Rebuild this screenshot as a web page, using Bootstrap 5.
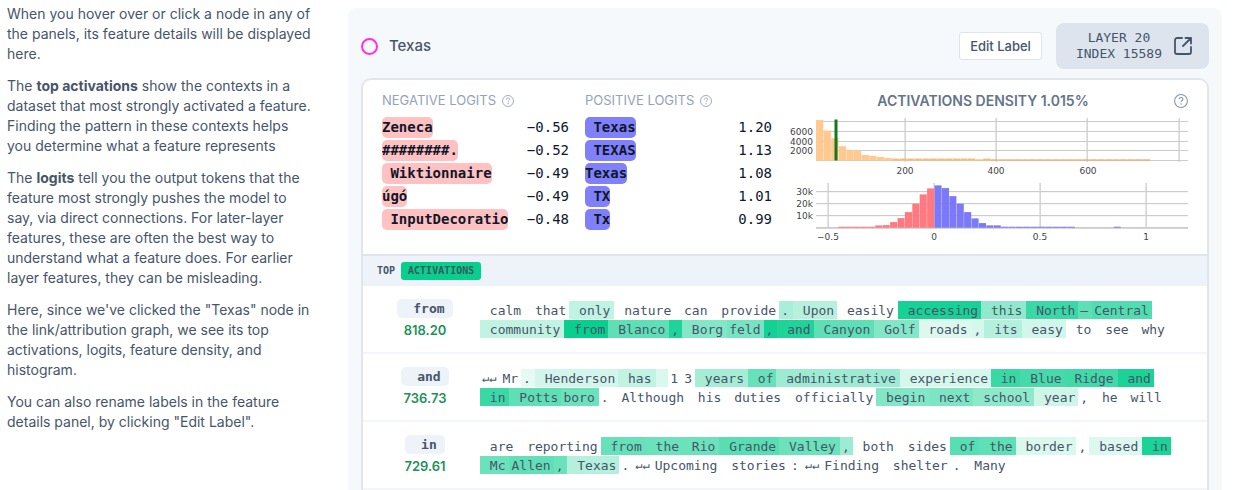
<!DOCTYPE html>
<html lang="en">
<head>
<meta charset="utf-8">
<meta name="viewport" content="width=device-width, initial-scale=1">
<title>Feature details</title>
<link href="https://cdn.jsdelivr.net/npm/bootstrap@5.3.0/dist/css/bootstrap.min.css" rel="stylesheet">
<style>
body{font-family:Inter,sans-serif;font-size:14px;line-height:20px;color:#475569;background:#fff}
.mono{font-family:"DejaVu Sans Mono",monospace}
.intro{flex:0 0 348px;padding:4px 34px 0 7px}
.intro p{margin-bottom:12px}
.panel{background:#f6f9fb;border-radius:8px 8px 0 0;padding:15px 13px 0;margin:8px 12px 0 0;min-width:0}
.ring{width:17px;height:17px;border:2px solid #ff2fe6;border-radius:50%}
.feature-name{font-size:15px;font-weight:500;line-height:24px;margin:0;padding-left:11px}
.edit{font-size:13px;line-height:20px;font-weight:500;color:#475569;background:#fff;border:1px solid #dfe4ec;border-radius:3px;padding:3px 10px}
.source{background:#dde4ed;border-radius:8px;color:#475569;font-size:13px;line-height:16px;padding:7px 17px 7px 20px;margin-left:14px;gap:12px;text-decoration:none;text-align:center}
.details{background:#fff;border:2px solid #e1e6ed;border-bottom:0;border-radius:10px 10px 0 0;margin-top:9px;overflow:hidden}
.stats{display:grid;grid-template-columns:187px 187px minmax(0,1fr);padding:11px 11px 0 19px;height:174px}
.stats>section+section{margin-left:16px;margin-right:-16px}
.stats>section.density{margin-left:28px;margin-right:0}
.caption{font-size:13px;line-height:19px;font-weight:400;color:#94a3b8;margin:0 0 7px;gap:6px}
.density .caption{font-size:14px;font-weight:600;color:#64748b;margin:0;padding-left:14px}
.density .caption svg{color:#8593ab}
.logits{width:100%;color:#0f172a;font-size:14px;line-height:21px;border-collapse:separate;border-spacing:0;table-layout:fixed}
.logits td{padding:0 0 2px;height:23px}
.logits td:last-child{width:50px;text-align:right}
.chip{display:block;width:fit-content;max-width:126px;overflow:hidden;white-space:pre;font-weight:700;border-radius:5px}
.neg .chip{background:#ffc1c1}
.pos .chip{background:#8080fb}
.acts-head{background:#eef2f9;border-top:2px solid #dfe4ea;font-size:10px;line-height:18px;font-weight:700;padding:6px 14px;gap:6px}
.acts-head mark{background:#08ce8e;color:#3c5a5c;border-radius:3px;padding:0 7px}
.act{border-bottom:2px solid #f2f5fa;padding:13px 0 0 14px;height:68px;gap:7px}
.peak{flex:0 0 96px;text-align:center}
.peak .mono{display:block;width:fit-content;margin:0 auto;background:#eef2f9;border-radius:5px;font-size:13px;line-height:19px;font-weight:700;padding:0 8px;white-space:pre}
.peak b{display:block;font-size:13px;line-height:20px;margin-top:2px;color:#1e9159;font-weight:600}
.context{font-size:13px;line-height:17px;padding-top:2px}
.line{display:flex;white-space:pre;margin-bottom:1px}
.line span{padding:1px 4px 0 2px}
.line span:nth-child(even){padding-right:3px}
.line .ret{font-size:12px}
svg text{font-family:"DejaVu Sans",sans-serif;font-size:9px;fill:#444}
</style>
</head>
<body>
<svg width="0" height="0" class="position-absolute"><symbol id="help" viewBox="0 0 24 24"><circle cx="12" cy="12" r="11" fill="none" stroke="currentColor" stroke-width="1.8"/><path d="M8.8 9.2c0-4.4 6.5-4.1 6.5-.3 0 2.3-3.1 2.3-3.1 5" fill="none" stroke="currentColor" stroke-width="1.9"/><circle cx="12.2" cy="17.2" r="1.3" fill="currentColor"/></symbol></svg>
<div class="d-flex vh-100 overflow-hidden">
<aside class="intro">
<p>When you hover over or click a node in any of the panels, its feature details will be displayed here.</p>
<p>The <b>top activations</b> show the contexts in a dataset that most strongly activated a feature. Finding the pattern in these contexts helps you determine what a feature represents</p>
<p>The <b>logits</b> tell you the output tokens that the feature most strongly pushes the model to say, via direct connections. For later-layer features, these are often the best way to understand what a feature does. For earlier layer features, they can be misleading.</p>
<p>Here, since we've clicked the "Texas" node in the link/attribution graph, we see its top activations, logits, feature density, and histogram.</p>
<p>You can also rename labels in the feature details panel, by clicking "Edit Label".</p>
</aside>
<main class="panel flex-grow-1">
<header class="d-flex align-items-center">
<span class="ring"></span><h1 class="feature-name flex-grow-1">Texas</h1>
<button type="button" class="edit">Edit Label</button>
<a href="#" class="source mono d-flex align-items-center"><span>LAYER 20<br>INDEX 15589</span>
<svg width="18" height="18" viewBox="0 0 18 18" fill="none" stroke="currentColor" stroke-width="1.8" stroke-linecap="round" stroke-linejoin="round"><path d="M8 1H3a2 2 0 0 0-2 2v12a2 2 0 0 0 2 2h12a2 2 0 0 0 2-2v-5M11.500 1H17v5.500M17 1 9 9"/></svg></a>
</header>
<div class="details">
<div class="stats">
<section class="neg">
<h2 class="caption d-flex align-items-center">NEGATIVE LOGITS <svg width="12" height="12"><use href="#help"/></svg></h2>
<table class="logits mono">
<tr><td><span class="chip">Zeneca</span></td><td>−0.56</td></tr>
<tr><td><span class="chip">########.</span></td><td>−0.52</td></tr>
<tr><td><span class="chip"> Wiktionnaire</span></td><td>−0.49</td></tr>
<tr><td><span class="chip">úgó</span></td><td>−0.49</td></tr>
<tr><td><span class="chip"> InputDecoration</span></td><td>−0.48</td></tr>
</table>
</section>
<section class="pos">
<h2 class="caption d-flex align-items-center">POSITIVE LOGITS <svg width="12" height="12"><use href="#help"/></svg></h2>
<table class="logits mono">
<tr><td><span class="chip"> Texas</span></td><td>1.20</td></tr>
<tr><td><span class="chip"> TEXAS</span></td><td>1.13</td></tr>
<tr><td><span class="chip">Texas</span></td><td>1.08</td></tr>
<tr><td><span class="chip"> TX</span></td><td>1.01</td></tr>
<tr><td><span class="chip"> Tx</span></td><td>0.99</td></tr>
</table>
</section>
<section class="density">
<h2 class="caption d-flex align-items-center"><span class="flex-grow-1 text-center">ACTIVATIONS DENSITY 1.015%</span><svg width="14" height="14" class="me-2"><use href="#help"/></svg></h2>
<svg id="charts" class="d-block w-100" viewBox="0 0 412 138"></svg>
</section>
</div>
<div class="acts-head mono d-flex align-items-center"><span>TOP</span><mark>ACTIVATIONS</mark></div>
<div id="acts"></div>
</div>
</main>
</div>
<script src="https://cdn.jsdelivr.net/npm/bootstrap@5.3.0/dist/js/bootstrap.bundle.min.js"></script>
<script>
// Each token is [text, activation strength from 0 to 100].
const rows = [
 [" from", "818.20", [
  [[" calm",0],[" that",0],[" only",25],[" nature",0],[" can",0],[" provide",0],[".",35],[" Upon",29],[" easily",0],[" accessing",94],[" this",45],[" North",80],["–",65],["Central",70]],
  [[" community",25],[" from",100],[" Blanco",65],[",",90],[" Borg",50],["feld",55],[",",95],[" and",90],[" Canyon",65],[" Golf",50],[" roads",14],[",",17],[" its",30],[" easy",18],[" to",0],[" see",0],[" why",0]]]],
 [" and", "736.73", [
  [["↵↵",0],["Mr",0],[".",10],[" Henderson",18],[" has",25],[" ",15],["1",0],["3",0],[" years",36],[" of",62],[" administrative",40],[" experience",17],[" in",80],[" Blue",75],[" Ridge",77],[" and",92]],
  [[" in",80],[" Potts",65],["boro",60],[".",0],[" Although",0],[" his",0],[" duties",0],[" officially",0],[" begin",50],[" next",52],[" school",46],[" year",20],[",",0],[" he",0],[" will",0]]]],
 [" in", "729.61", [
  [[" are",0],[" reporting",0],[" from",62],[" the",60],[" Rio",60],[" Grande",67],[" Valley",60],[",",40],[" both",0],[" sides",0],[" of",68],[" the",65],[" border",15],[",",0],[" based",14],[" in",92]],
  [[" Mc",60],["Allen",64],[",",60],[" Texas",30],[".",0],["↵↵",0],["Upcoming",0],[" stories",0],[":",0],["↵↵",0],["Finding",0],[" shelter",0],[".",0],[" Many",0]]]]
];
document.getElementById("acts").innerHTML = rows.map(([label, score, lines]) =>
 `<div class="act d-flex"><div class="peak"><span class="mono">${label}</span><b>${score}</b></div><div class="context mono">` +
 lines.map(l => `<div class="line">` + l.map(([t, a]) =>
  `<span${t[0] === "↵" ? ' class="ret"' : ""}${a ? ` style="background:rgba(8,206,142,${a / 100})"` : ""}>${t}</span>`).join("") + "</div>").join("") +
 "</div></div>").join("");

let g = "";
const rect = (x, y, w, h, f) => g += `<rect x="${x}" y="${y}" width="${w}" height="${h}" fill="${f}"/>`;
const label = (x, y, t, a) => g += `<text x="${x}" y="${y}" text-anchor="${a}">${t}</text>`;
// Activation density
[11, 21, 31, 40, 50].forEach(y => rect(32, y, 372, 1, "#ccc"));
[121, 212, 303, 395].forEach(x => rect(x - .5, 8, 1.3, 44, "#ccc"));
[40.5, 30, 22.3, 14.3, 10.7, 10, 5.5, 4.6, 3.6, 2.6].forEach((h, i) => rect(32 + i * 7.6, 50.5 - h, 7.3, h, "#ffc98f"));
for (let i = 10; i < 44; i++) { const h = i < 21 || i === 22 ? 1.9 : 1.1; rect(32 + i * 7.6, 50.5 - h, 7.3, h, i < 23 ? "#fdb974" : "#f6a35c"); }
rect(50.5, 9.5, 3, 41, "#13791b");
["6000", "4000", "2000"].forEach((t, i) => label(29, 25 + i * 9.6, t, "end"));
[[121, 200], [212, 400], [304, 600]].forEach(([x, t]) => label(x, 64, t, "middle"));
// Logit histogram
[81, 93, 105].forEach(y => rect(32, y, 372, 1.2, "#ccc"));
rect(32, 117, 372, 1.8, "#ccc");
[44, 150, 256, 362].forEach(x => rect(x - .5, 73, 1.3, 45, "#ccc"));
[1, 1, 1, 1, 1, 2.3, 2.6, 5.6, 9.6, 15.6, 24, 33.3, 39.3].forEach((h, i) => rect(54.3 + i * 7.4, 117.7 - h, 7.1, h, "#ff7a80"));
[42.3, 39.6, 31.6, 24, 15.6, 9.3, 4.6, 2.3, 2.3, 1, 1, 1, 1, 1, 1, 1, 1, 1, 1].forEach((h, i) => rect(150.5 + i * 7.4, 117.7 - h, 7.1, h, "#7b79f7"));
rect(329.7, 116.7, 7, 1, "#7b79f7");
["30k", "20k", "10k"].forEach((t, i) => label(29, 85 + i * 12, t, "end"));
[[44, "−0.5"], [150, "0"], [256, "0.5"], [362, "1"]].forEach(([x, t]) => label(x, 130, t, "middle"));
document.getElementById("charts").innerHTML = g;
</script>
</body>
</html>
